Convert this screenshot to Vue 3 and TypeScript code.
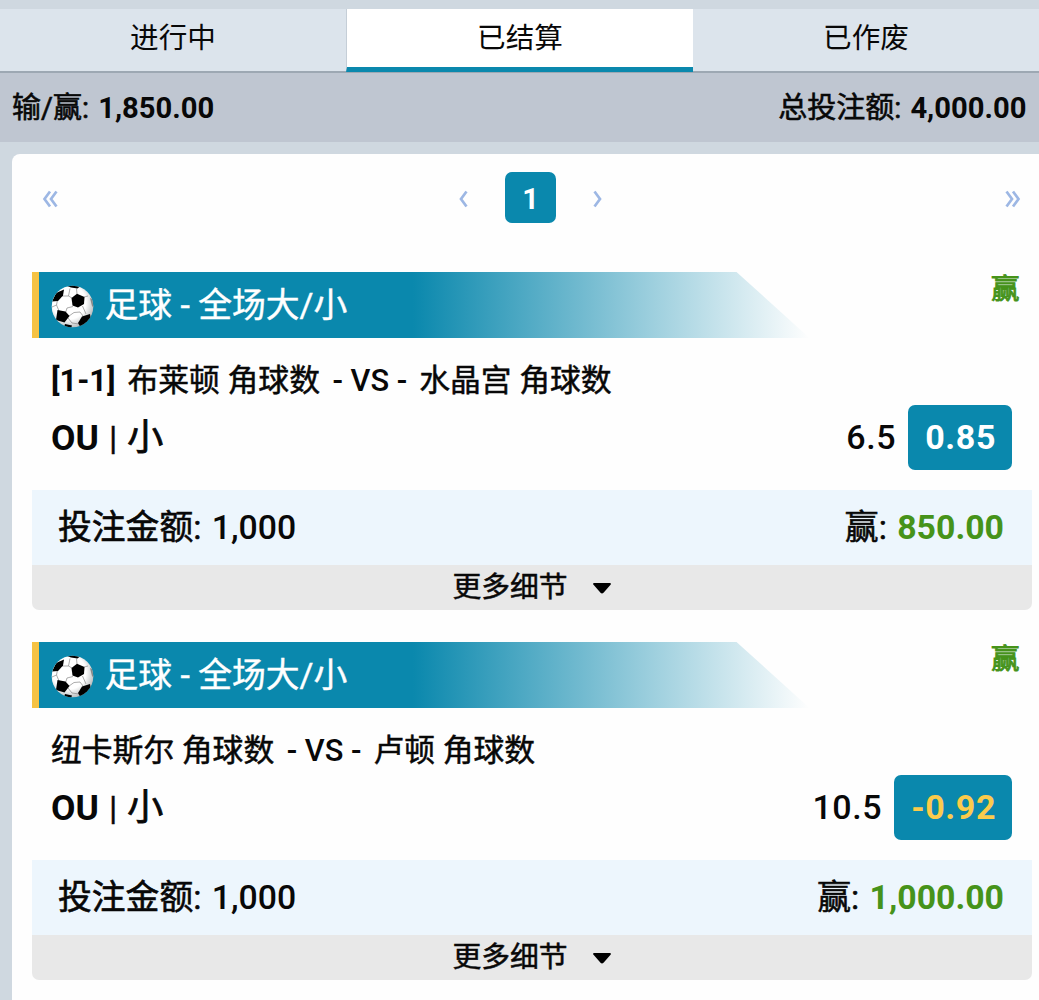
<script setup lang="ts">
interface Bet {
  score: string
  home: string
  away: string
  line: string
  odds: string
  stake: string
  win: string
}

const tabs: string[] = ['进行中', '已结算', '已作废']
const activeTab = 1

const bets: Bet[] = [
  { score: '[1-1]', home: '布莱顿 角球数', away: '水晶宫 角球数', line: '6.5', odds: '0.85', stake: '1,000', win: '850.00' },
  { score: '', home: '纽卡斯尔 角球数', away: '卢顿 角球数', line: '10.5', odds: '-0.92', stake: '1,000', win: '1,000.00' },
]
</script>

<template>
  <div class="page" lang="zh-CN">
    <nav class="tabs">
      <div v-for="(tab, i) in tabs" :key="tab" class="tab" :class="{ active: i === activeTab }">{{ tab }}</div>
    </nav>
    <div class="summary">
      <div>输/赢: <b>1,850.00</b></div>
      <div>总投注额: <b>4,000.00</b></div>
    </div>
    <main class="panel">
      <div class="pager">
        <svg class="arrow" width="16" height="18" viewBox="0 0 16 18"><path d="M8 1.500 2.500 9 8 16.500M14.500 1.500 9 9l5.500 7.500" /></svg>
        <div class="pager-mid">
          <svg class="arrow" width="9" height="18" viewBox="0 0 9 18"><path d="M7.500 1.500 2 9l5.500 7.500" /></svg>
          <span class="current">1</span>
          <svg class="arrow" width="9" height="18" viewBox="0 0 9 18"><path d="M1.500 1.500 7 9l-5.500 7.500" /></svg>
        </div>
        <svg class="arrow" width="16" height="18" viewBox="0 0 16 18"><path d="M1.500 1.500 7 9l-5.500 7.500M8 1.500 13.500 9 8 16.500" /></svg>
      </div>

      <section v-for="(bet, i) in bets" :key="i" class="card">
        <header class="card-head">
          <div class="banner">
            <svg class="ball" width="43" height="43" viewBox="0 0 43 43">
              <defs>
                <radialGradient :id="'shade' + i" cx=".42" cy=".4" r=".62">
                  <stop offset=".65" stop-color="#fff" />
                  <stop offset="1" stop-color="#b9bcbd" />
                </radialGradient>
                <clipPath :id="'round' + i"><circle cx="21.500" cy="21.500" r="20.800" /></clipPath>
              </defs>
              <circle cx="21.500" cy="21.500" r="20.800" :fill="`url(#shade${i})`" />
              <g :clip-path="`url(#round${i})`">
                <path class="seam" d="M21 13 17.500 11 10.500 11M6.500 15 5.500 20l3 7M18 31l5-3.500 6-.5 3 4M22 21.500 16 23l-1.500 5M17.500 11 19 3.500M26 9 25.500 3.500M33 12l4-1M31.500 21 35 29M17 33l4 5 7 1M1 22l4.500-2" />
                <path d="M20.500 13 26 8.800 33.500 12 33 19 27 22.500 21.500 20.500Z" />
                <path d="M6.500 25 14.500 26.500 18.500 31 13.500 37.500 5 35Z" />
                <path d="M1 16.500 5 8 13 4.500 12 10.500 7 16Z" />
                <path d="M27 38 31 31.500 39 29 40 35 30 43Z" />
                <path d="M16 1 22 0 29 1.500 26.500 3.500 20 2.500Z" />
                <path d="M39 13 43 15v8l-2-2Z" fill="#888" />
                <path d="M14 39 21 40.500l-1 3-7-1Z" />
              </g>
            </svg>
            <span class="title">足球 - 全场大/小</span>
          </div>
          <span class="result">赢</span>
        </header>
        <div class="match">
          <b v-if="bet.score" class="score">{{ bet.score }}</b><span>{{ bet.home }}</span><span class="vs">- VS -</span><span>{{ bet.away }}</span>
        </div>
        <div class="pick">
          <div class="choice"><b>OU</b><span class="bar">|</span>小</div>
          <div class="price">
            <span class="line">{{ bet.line }}</span>
            <span class="odds" :class="{ negative: bet.odds.startsWith('-') }">{{ bet.odds }}</span>
          </div>
        </div>
        <div class="money">
          <div>投注金额: <span class="stake">{{ bet.stake }}</span></div>
          <div>赢: <b class="win">{{ bet.win }}</b></div>
        </div>
        <div class="more">
          <span>更多细节</span>
          <svg width="18" height="11" viewBox="0 0 18 11"><path d="M1 0h16q1.500.5.500 1.800L10.500 9.800q-1.500 1.200-3 0L.5 1.800Q-.5.5 1 0Z" /></svg>
        </div>
      </section>
    </main>
  </div>
</template>

<style>
body {
  background: #cfd8e0;
}
</style>

<style scoped>
.page {
  box-sizing: border-box;
  width: 1039px;
  height: 1000px;
  padding-top: 9px;
  overflow: hidden;
  background: #cfd8e0;
  color: #080808;
  font-family: Roboto, "Noto Sans CJK SC", sans-serif;
}
.tabs {
  display: flex;
  height: 62px;
  border-bottom: 2px solid #9da8b3;
  background: #dce4ec;
}
.tab {
  box-sizing: border-box;
  flex: 1;
  height: 63px;
  line-height: 58px;
  text-align: center;
  font-size: 28.600px;
}
.tab.active {
  border-left: 1px solid #c5ced7;
  border-bottom: 5px solid #0a88ad;
  background: #fff;
  position: relative;
}
.summary {
  display: flex;
  justify-content: space-between;
  height: 69px;
  padding: 0 12.500px 0 12px;
  background: #bfc6d1;
  line-height: 70px;
  font-size: 29px;
  -webkit-text-stroke: .6px;
}
.summary b {
  margin-left: 2px;
  font-size: 29.200px;
  -webkit-text-stroke: 0;
}
.panel {
  height: 846px;
  margin: 12px 0 0 12px;
  border-radius: 8px 0 0 0;
  background: #fefefe;
}
.pager {
  display: flex;
  align-items: center;
  justify-content: space-between;
  height: 89px;
  padding: 0 18px 0 30px;
}
.pager-mid {
  display: flex;
  align-items: center;
  gap: 37px;
  margin-right: 2px;
}
.arrow path {
  fill: none;
  stroke: #9db7e4;
  stroke-width: 2.700;
}
.current {
  width: 51px;
  height: 51px;
  margin-bottom: 2px;
  border-radius: 7px;
  background: #0a88ad;
  color: #fff;
  line-height: 54px;
  text-align: center;
  font-size: 29px;
  font-weight: 700;
}
.card {
  width: 1000px;
  height: 338px;
  margin: 29px 0 0 19.500px;
}
.card + .card {
  margin-top: 32px;
}
.card-head {
  display: flex;
  justify-content: space-between;
  height: 66px;
}
.banner {
  box-sizing: border-box;
  display: flex;
  align-items: center;
  width: 778px;
  padding-left: 12px;
  border-left: 7px solid #f6c344;
  background: linear-gradient(90deg, #0a88ad 0, #0a88ad 48.500%, rgba(10, 136, 173, 0) 100%) padding-box;
  clip-path: polygon(0 0, 705px 0, 778px 100%, 0 100%);
  color: #fff;
  line-height: 66px;
  font-size: 33.800px;
  -webkit-text-stroke: .4px;
}
.title {
  padding-top: 1px;
}
.ball {
  margin-right: 11px;
  margin-top: 2px;
}
.seam {
  fill: none;
  stroke: #888;
  stroke-width: .7;
}
.result {
  margin-right: 12px;
  color: #46931a;
  line-height: 35px;
  font-size: 28.500px;
  -webkit-text-stroke: .9px;
}
.match {
  height: 67px;
  margin: 8px 0 0 19.500px;
  line-height: 69px;
  white-space: pre;
  font-size: 30.800px;
  -webkit-text-stroke: .5px;
}
.score {
  margin-right: 12px;
  -webkit-text-stroke: 0;
}
.vs {
  margin: 0 12px 0 12.500px;
  font-weight: 500;
  -webkit-text-stroke: 0;
}
.pick {
  display: flex;
  justify-content: space-between;
  height: 65px;
  margin: -8px 19.500px 0 19.500px;
  font-size: 34px;
}
.choice {
  line-height: 66px;
  font-size: 36px;
  -webkit-text-stroke: .8px;
}
.choice b {
  font-size: 35.500px;
  -webkit-text-stroke: 0;
}
.bar {
  margin: 0 10px;
  font-size: 34px;
  -webkit-text-stroke: .4px;
}
.price {
  display: flex;
  align-items: center;
  gap: 12px;
  line-height: 65px;
  letter-spacing: .6px;
}
.line {
  font-weight: 500;
}
.odds {
  padding: 0 16px 0 17px;
  border-radius: 7px;
  background: #0a88ad;
  color: #fff;
  font-weight: 700;
}
.odds.negative {
  color: #fbcb4c;
}
.money {
  display: flex;
  justify-content: space-between;
  height: 75px;
  margin-top: 20px;
  padding: 0 27.500px 0 26.500px;
  background: #edf6fd;
  line-height: 75px;
  font-size: 33.800px;
  -webkit-text-stroke: .6px;
}
.stake {
  margin-left: 2px;
  font-weight: 500;
  -webkit-text-stroke: 0;
}
.win {
  margin-left: 2px;
  color: #46931a;
  -webkit-text-stroke: 0;
}
.more {
  display: flex;
  align-items: center;
  justify-content: center;
  gap: 25px;
  height: 45px;
  border-radius: 0 0 7px 7px;
  background: #e8e8e8;
  line-height: 49px;
  font-size: 28.800px;
  -webkit-text-stroke: .5px;
}
.more svg {
  margin-top: 1px;
}
</style>
